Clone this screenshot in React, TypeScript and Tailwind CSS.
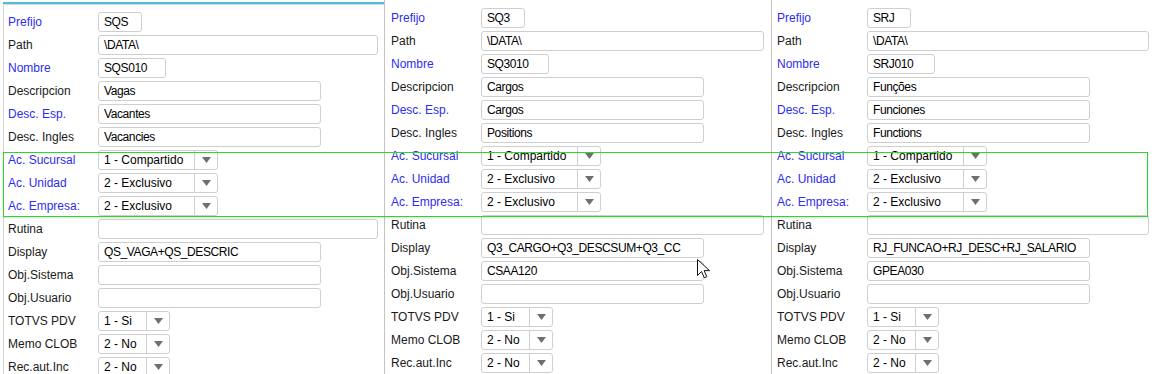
import React from "react";

type Field =
  | { label: string; blue?: boolean; kind: "input"; value: string; w: number }
  | { label: string; blue?: boolean; kind: "select"; value: string; w: number; div: number };

function makeFields(d: {
  pre: string;
  nom: string;
  desc: string;
  esp: string;
  ing: string;
  disp: string;
  obj: string;
  pathW: number;
}): Field[] {
  return [
    { label: "Prefijo", blue: true, kind: "input", value: d.pre, w: 44 },
    { label: "Path", kind: "input", value: "\\DATA\\", w: d.pathW },
    { label: "Nombre", blue: true, kind: "input", value: d.nom, w: 68 },
    { label: "Descripcion", kind: "input", value: d.desc, w: 223 },
    { label: "Desc. Esp.", blue: true, kind: "input", value: d.esp, w: 223 },
    { label: "Desc. Ingles", kind: "input", value: d.ing, w: 223 },
    { label: "Ac. Sucursal", blue: true, kind: "select", value: "1 - Compartido", w: 120, div: 24 },
    { label: "Ac. Unidad", blue: true, kind: "select", value: "2 - Exclusivo", w: 120, div: 24 },
    { label: "Ac. Empresa:", blue: true, kind: "select", value: "2 - Exclusivo", w: 120, div: 24 },
    { label: "Rutina", kind: "input", value: "", w: d.pathW },
    { label: "Display", kind: "input", value: d.disp, w: 223 },
    { label: "Obj.Sistema", kind: "input", value: d.obj, w: 223 },
    { label: "Obj.Usuario", kind: "input", value: "", w: 223 },
    { label: "TOTVS PDV", kind: "select", value: "1 - Si", w: 72, div: 24 },
    { label: "Memo CLOB", kind: "select", value: "2 - No", w: 72, div: 24 },
    { label: "Rec.aut.Inc", kind: "select", value: "2 - No", w: 72, div: 24 },
  ];
}

const panels = [
  makeFields({
    pre: "SQS",
    nom: "SQS010",
    desc: "Vagas",
    esp: "Vacantes",
    ing: "Vacancies",
    disp: "QS_VAGA+QS_DESCRIC",
    obj: "",
    pathW: 280,
  }),
  makeFields({
    pre: "SQ3",
    nom: "SQ3010",
    desc: "Cargos",
    esp: "Cargos",
    ing: "Positions",
    disp: "Q3_CARGO+Q3_DESCSUM+Q3_CC",
    obj: "CSAA120",
    pathW: 283,
  }),
  makeFields({
    pre: "SRJ",
    nom: "SRJ010",
    desc: "Funções",
    esp: "Funciones",
    ing: "Functions",
    disp: "RJ_FUNCAO+RJ_DESC+RJ_SALARIO",
    obj: "GPEA030",
    pathW: 282,
  }),
];

function Arrow() {
  return (
    <svg width="9" height="6" viewBox="0 0 9 6">
      <path d="M0 0 L9 0 L4.5 6 Z" fill="#6b6f76" />
    </svg>
  );
}

function Row({ f }: { f: Field }) {
  return (
    <div className="flex h-[23px] items-center">
      <div
        className={
          "w-[90px] shrink-0 text-[12px] leading-none " +
          (f.blue ? "text-[#2d2df0]" : "text-[#1a1a1a]")
        }
      >
        {f.label}
      </div>
      {f.kind === "input" ? (
        <div
          className="flex h-[20px] shrink-0 items-center overflow-hidden whitespace-nowrap rounded-[3px] border border-[#cfcfcf] bg-white pl-[5px] text-[12px] leading-none tracking-[-0.4px] text-black"
          style={{ width: f.w }}
        >
          {f.value}
        </div>
      ) : (
        <div
          className="flex h-[20px] shrink-0 items-stretch rounded-[3px] border border-[#cfcfcf] bg-white text-[12px] leading-none text-black"
          style={{ width: f.w }}
        >
          <div className="flex flex-1 items-center pl-[5px]">{f.value}</div>
          <div className="flex w-[23px] items-center justify-center border-l border-[#cfcfcf]">
            <Arrow />
          </div>
        </div>
      )}
    </div>
  );
}

function Cursor() {
  return (
    <svg width="13" height="20" viewBox="0 0 13 20">
      <path
        d="M0.5 0.5 L0.5 16.5 L4.5 12.5 L7.3 18.8 L9.8 17.7 L7.1 11.6 L12.5 11.6 Z"
        fill="white"
        stroke="#111"
        strokeWidth="1"
        strokeLinejoin="miter"
      />
    </svg>
  );
}

export default function App() {
  return (
    <div
      className="relative h-[374px] w-[1156px] overflow-hidden bg-white"
      style={{ fontFamily: '"Liberation Sans", Arial, sans-serif' }}
    >
      <div className="flex h-full">
        {/* Panel 1 */}
        <div className="w-[384px] shrink-0 pl-[3px] pt-[2px]">
          <div className="h-full border-t-2 border-[#52bddb]">
            <div className="h-full border-l border-t border-[#d6d6d6] pl-[4px] pt-[5px]">
              {panels[0].map((f, i) => (
                <Row key={i} f={f} />
              ))}
            </div>
          </div>
        </div>
        {/* Panel 2 */}
        <div className="w-[387px] shrink-0 border-l border-[#c4c4c4] pl-[6px] pt-[6px]">
          {panels[1].map((f, i) => (
            <Row key={i} f={f} />
          ))}
        </div>
        {/* Panel 3 */}
        <div className="flex-1 border-l border-[#c4c4c4] pl-[5px] pt-[6px]">
          {panels[2].map((f, i) => (
            <Row key={i} f={f} />
          ))}
        </div>
      </div>

      {/* green highlight rectangle overlay */}
      <div className="pointer-events-none absolute left-[3px] top-[152px] h-[65px] w-[1145px] border border-[#2fd62f] shadow-[0_1px_2px_rgba(0,0,0,0.15)]" />

      {/* mouse cursor */}
      <div className="pointer-events-none absolute left-[697px] top-[259px]">
        <Cursor />
      </div>
    </div>
  );
}
